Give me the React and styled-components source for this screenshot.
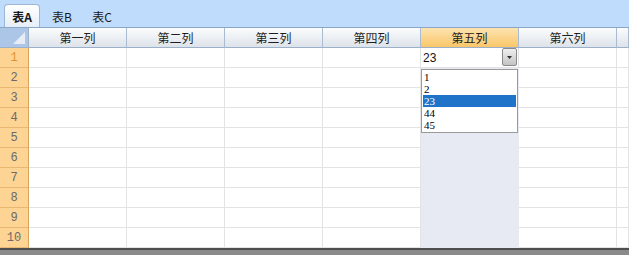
import React from 'react';
import styled, { createGlobalStyle } from 'styled-components';

const Global = createGlobalStyle`
  html, body {
    margin: 0;
    padding: 0;
    background: #ffffff;
    overflow: hidden;
  }
  body {
    font-family: "Noto Sans CJK SC", "Liberation Sans", sans-serif;
  }
`;

const Page = styled.div`
  width: 629px;
  height: 255px;
  display: flex;
  flex-direction: column;
  background: #ffffff;
  overflow: hidden;
`;

const TabBar = styled.div`
  flex: none;
  display: flex;
  align-items: flex-end;
  padding-left: 4px;
  background: #c0dcfc;
  border-bottom: 1px solid #8ca7c6;
  box-sizing: border-box;
  height: 28px;
`;

const Tab = styled.div`
  height: 23px;
  width: ${(p) => (p.$active ? '36px' : '40px')};
  margin-right: ${(p) => (p.$active ? '2px' : '0')};
  box-sizing: border-box;
  display: flex;
  align-items: center;
  justify-content: center;
  font-size: 12px;
  color: #1a1a1a;
  font-weight: ${(p) => (p.$active ? 700 : 400)};
  border-radius: 4px 4px 0 0;
  border: ${(p) => (p.$active ? '1px solid #9db6d3' : '1px solid transparent')};
  border-bottom: none;
  background: ${(p) =>
    p.$active ? 'linear-gradient(#ffffff, #e6eef8)' : 'transparent'};
  font-family: "Noto Sans CJK SC", "Liberation Serif", serif;
`;

const Grid = styled.div`
  display: grid;
  grid-template-columns: 29px repeat(6, 98px) 1fr;
  grid-auto-rows: 20px;
  flex: none;
`;

const Corner = styled.div`
  position: relative;
  background: #acc6e7;
  border-right: 1px solid #9cb0c8;
  border-bottom: 1px solid #9cb0c8;
  box-sizing: border-box;
  &::after {
    content: '';
    position: absolute;
    right: 3px;
    bottom: 3px;
    width: 0;
    height: 0;
    border-left: 12px solid transparent;
    border-bottom: 12px solid #e6edf6;
  }
`;

const ColHead = styled.div`
  box-sizing: border-box;
  display: flex;
  align-items: center;
  justify-content: center;
  font-size: 12px;
  color: #1e1e1e;
  border-right: 1px solid #a9bbd0;
  border-bottom: 1px solid #9cb0c8;
  background: ${(p) =>
    p.$selected
      ? 'linear-gradient(#fde3b0, #f9c769)'
      : 'linear-gradient(#fbfcfd, #dde3ea)'};
`;

const RowHead = styled.div`
  box-sizing: border-box;
  display: flex;
  align-items: center;
  justify-content: center;
  font-size: 12px;
  font-family: "Liberation Mono", monospace;
  color: ${(p) => (p.$selected ? '#e0952a' : '#6a6a6a')};
  background: #fdd494;
  border-right: 1px solid #d6a358;
  border-bottom: 1px solid #e9b774;
`;

const Cell = styled.div`
  box-sizing: border-box;
  border-right: 1px solid ${(p) => (p.$selected ? '#e7e9f3' : '#e3e3e3')};
  border-bottom: 1px solid ${(p) => (p.$selected ? '#e7e9f3' : '#e3e3e3')};
  background: ${(p) => (p.$selected ? '#e7e9f3' : '#ffffff')};
`;

const EditCell = styled.div`
  position: relative;
  box-sizing: border-box;
  border-right: 1px solid #e3e3e3;
  border-bottom: 1px solid #e3e3e3;
  background: #ffffff;
  display: flex;
  align-items: center;
  padding-left: 2px;
  font-size: 12px;
  font-family: "Liberation Sans", sans-serif;
  color: #111;
`;

const DropButton = styled.div`
  position: absolute;
  right: 1px;
  top: 0;
  width: 15px;
  height: 18px;
  box-sizing: border-box;
  border: 1px solid #8a8a8a;
  border-radius: 2px;
  background: linear-gradient(#f0f0f0, #c4c4c4);
  display: flex;
  align-items: center;
  justify-content: center;
`;

const List = styled.div`
  position: absolute;
  left: 0;
  top: 21px;
  width: 97px;
  height: 64px;
  box-sizing: border-box;
  border: 1px solid #9a9a9a;
  background: #ffffff;
  padding: 1px 1px 0 1px;
  z-index: 2;
`;

const Option = styled.div`
  height: 12px;
  line-height: 12px;
  font-size: 11px;
  font-family: "Liberation Serif", serif;
  padding-left: 1px;
  overflow: hidden;
  color: ${(p) => (p.$active ? '#ffffff' : '#000000')};
  background: ${(p) => (p.$active ? '#1f74c9' : 'transparent')};
`;

const BottomBar = styled.div`
  flex: 1;
  background: #8a8a8a;
  border-top: 2px solid #4e4e4e;
`;

const columns = ['第一列', '第二列', '第三列', '第四列', '第五列', '第六列', ''];
const options = ['1', '2', '23', '44', '45'];

const Chevron = () => (
  <svg width="7" height="5" viewBox="0 0 7 5">
    <path d="M1 1 L3.5 4 L6 1 Z" fill="#303030" />
  </svg>
);

export default function App() {
  const rows = Array.from({ length: 10 }, (_, i) => i + 1);
  return (
    <Page>
      <Global />
      <TabBar>
        <Tab $active>表A</Tab>
        <Tab>表B</Tab>
        <Tab>表C</Tab>
      </TabBar>
      <Grid>
        <Corner />
        {columns.map((c, i) => (
          <ColHead key={i} $selected={i === 4}>
            {c}
          </ColHead>
        ))}
        {rows.map((r) => (
          <React.Fragment key={r}>
            <RowHead $selected={r === 1}>{r}</RowHead>
            {columns.map((_, ci) =>
              r === 1 && ci === 4 ? (
                <EditCell key={ci}>
                  23
                  <DropButton>
                    <Chevron />
                  </DropButton>
                  <List>
                    {options.map((o) => (
                      <Option key={o} $active={o === '23'}>
                        {o}
                      </Option>
                    ))}
                  </List>
                </EditCell>
              ) : (
                <Cell key={ci} $selected={ci === 4} />
              )
            )}
          </React.Fragment>
        ))}
      </Grid>
      <BottomBar />
    </Page>
  );
}
